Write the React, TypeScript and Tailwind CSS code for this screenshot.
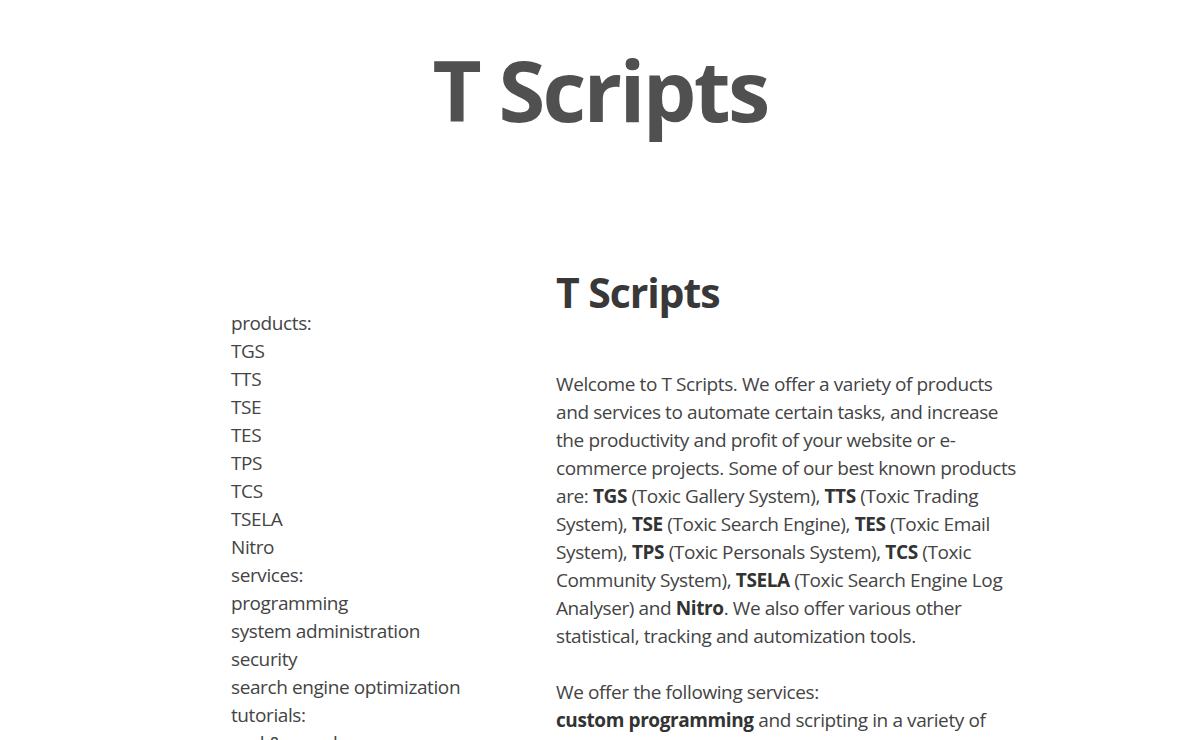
const PRODUCTS = ['TGS', 'TTS', 'TSE', 'TES', 'TPS', 'TCS', 'TSELA', 'Nitro']
const SERVICES = ['programming', 'system administration', 'security', 'search engine optimization']
const TUTORIALS = ['perl & mysql', 'php', 'linux']

function MenuGroup({ title, items }: { title: string; items: string[] }) {
  return (
    <>
      <div>{title}</div>
      {items.map((item) => (
        <a key={item} href="#" className="block">
          {item}
        </a>
      ))}
    </>
  )
}

export default function App() {
  return (
    <div className="min-h-screen bg-white text-[#444] font-['Open_Sans',sans-serif]">
      <header className="pt-[47px] text-center">
        <h1 className="text-[85px] leading-none font-bold tracking-[-2.7px] text-[#505050]">T Scripts</h1>
      </header>

      <main className="mt-[140px] flex pl-[231px] pb-16">
        {/* Menu */}
        <nav className="w-[325px] shrink-0 pt-[37px] text-[19px] leading-[28px] tracking-[-0.4px]">
          <MenuGroup title="products:" items={PRODUCTS} />
          <MenuGroup title="services:" items={SERVICES} />
          <MenuGroup title="tutorials:" items={TUTORIALS} />
        </nav>

        {/* Content */}
        <section className="w-[470px] shrink-0">
          <h2 className="text-[41px] leading-none font-bold tracking-[-1.1px] text-[#383838]">T Scripts</h2>
          <p className="mt-[57px] text-[19px] leading-[28px] tracking-[-0.4px]">
            Welcome to T Scripts. We offer a variety of products and services to automate certain tasks, and
            increase the productivity and profit of your website or e-commerce projects. Some of our best known
            products are: <b className="text-[#333]">TGS</b> (Toxic Gallery System), <b className="text-[#333]">TTS</b>{' '}
            (Toxic Trading System), <b className="text-[#333]">TSE</b> (Toxic Search Engine),{' '}
            <b className="text-[#333]">TES</b> (Toxic Email System), <b className="text-[#333]">TPS</b> (Toxic
            Personals System), <b className="text-[#333]">TCS</b> (Toxic Community System),{' '}
            <b className="text-[#333]">TSELA</b> (Toxic Search Engine Log Analyser) and{' '}
            <b className="text-[#333]">Nitro</b>. We also offer various other statistical, tracking and automization
            tools.
            <br />
            <br />
            We offer the following services:
            <br />
            <b className="text-[#333]">custom programming</b> and scripting in a variety of languages, including
            perl, php and shell.
            <br />
            <b className="text-[#333]">system administration</b> for linux and freebsd servers.
            <br />
            <b className="text-[#333]">security</b> audits and hardening.
            <br />
            <b className="text-[#333]">search engine optimization</b> for your websites.
          </p>
        </section>
      </main>
    </div>
  )
}
